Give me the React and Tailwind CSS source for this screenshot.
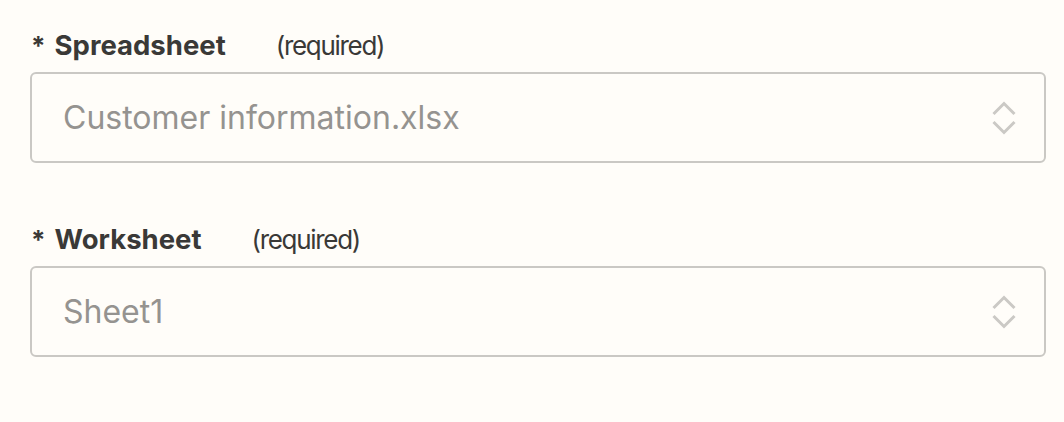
import React from 'react';

function Chevrons() {
  return (
    <svg width="24" height="34" viewBox="0 0 24 34" fill="none" className="shrink-0">
      <path d="M1.5 13 L12 2.5 L22.5 13" stroke="#cbc9c5" strokeWidth="3" />
      <path d="M1.5 21 L12 31.5 L22.5 21" stroke="#cbc9c5" strokeWidth="3" />
    </svg>
  );
}

function Field({ label, value }) {
  return (
    <div className="flex flex-col">
      <div className="flex items-baseline h-[37px] text-[#3a3937] pl-[1px]">
        <span className="text-[26px] font-bold mr-[9px]">*</span>
        <span className="text-[27.5px] font-bold">{label}</span>
        <span className="text-[26px] tracking-[-1.3px] ml-[50px]">(required)</span>
      </div>
      <div className="mt-[10px] h-[91px] rounded-[6px] border-2 border-[#cac8c4] flex items-center justify-between pl-[31px] pr-[28px]">
        <span className="text-[32px] text-[#959390]">{value}</span>
        <Chevrons />
      </div>
    </div>
  );
}

export default function App() {
  return (
    <div className="w-[1064px] h-[422px] bg-[#fffdf9] pl-[30px] pr-[18px] pt-[25px] flex flex-col gap-[56px]" style={{ fontFamily: 'Inter, "Noto Sans", sans-serif' }}>
      <Field label="Spreadsheet" value="Customer information.xlsx" />
      <Field label="Worksheet" value="Sheet1" />
    </div>
  );
}
